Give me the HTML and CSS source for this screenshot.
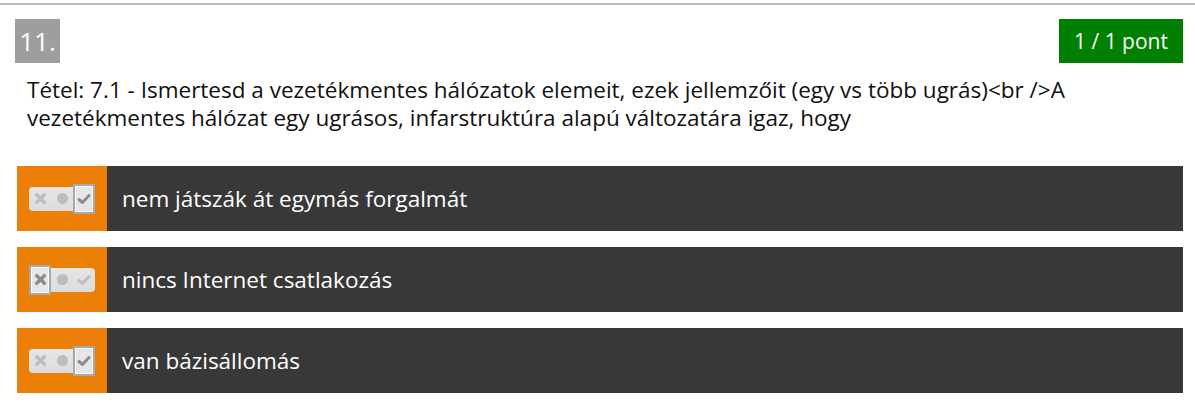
FILE: index.html
```html
<!DOCTYPE html>
<html lang="hu">
<head>
<meta charset="utf-8">
<link rel="stylesheet" href="styles.css">
</head>
<body>
<div class="page">
  <div class="question">
    <div class="head">
      <span class="num">11.</span>
      <span class="score">1 / 1 pont</span>
    </div>
    <p class="text">Tétel: 7.1 - Ismertesd a vezetékmentes hálózatok elemeit, ezek jellemzőit (egy vs több ugrás)&lt;br /&gt;A vezetékmentes hálózat egy ugrásos, infarstruktúra alapú változatára igaz, hogy</p>
    <div class="options">
      <div class="option">
        <div class="mark">
          <div class="toggle state-yes">
            <span class="slot x"><svg viewBox="0 0 12 12" width="13" height="13"><path d="M2.5 2.5 L9.5 9.5 M9.5 2.5 L2.5 9.5" stroke="#bdbdbd" stroke-width="3.2" stroke-linecap="round"/></svg></span>
            <span class="slot dot"><span class="circle"></span></span>
            <span class="slot ok"><svg viewBox="0 0 14 12" width="14" height="12"><path d="M2 6.5 L5.5 9.5 L12 2.5" fill="none" stroke="#8c8c8c" stroke-width="3" stroke-linecap="round" stroke-linejoin="round"/></svg></span>
          </div>
        </div>
        <div class="label">nem játszák át egymás forgalmát</div>
      </div>
      <div class="option">
        <div class="mark">
          <div class="toggle state-no">
            <span class="slot x"><svg viewBox="0 0 12 12" width="13" height="13"><path d="M2.5 2.5 L9.5 9.5 M9.5 2.5 L2.5 9.5" stroke="#8c8c8c" stroke-width="3.2" stroke-linecap="round"/></svg></span>
            <span class="slot dot"><span class="circle"></span></span>
            <span class="slot ok"><svg viewBox="0 0 14 12" width="14" height="12"><path d="M2 6.5 L5.5 9.5 L12 2.5" fill="none" stroke="#bdbdbd" stroke-width="3" stroke-linecap="round" stroke-linejoin="round"/></svg></span>
          </div>
        </div>
        <div class="label">nincs Internet csatlakozás</div>
      </div>
      <div class="option">
        <div class="mark">
          <div class="toggle state-yes">
            <span class="slot x"><svg viewBox="0 0 12 12" width="13" height="13"><path d="M2.5 2.5 L9.5 9.5 M9.5 2.5 L2.5 9.5" stroke="#bdbdbd" stroke-width="3.2" stroke-linecap="round"/></svg></span>
            <span class="slot dot"><span class="circle"></span></span>
            <span class="slot ok"><svg viewBox="0 0 14 12" width="14" height="12"><path d="M2 6.5 L5.5 9.5 L12 2.5" fill="none" stroke="#8c8c8c" stroke-width="3" stroke-linecap="round" stroke-linejoin="round"/></svg></span>
          </div>
        </div>
        <div class="label">van bázisállomás</div>
      </div>
    </div>
  </div>
</div>
</body>
</html>
```

FILE: styles.css
```css
html, body {
  margin: 0;
  padding: 0;
  background: #fff;
}
body {
  font-family: "Open Sans", "Liberation Sans", sans-serif;
  color: #111;
}
.page {
  padding-top: 3px;
}
.question {
  border-top: 2px solid #bdbdbd;
  padding: 14px 12px 0 17px;
}
.head {
  display: flex;
  justify-content: space-between;
  align-items: flex-start;
  margin-left: -2px;
}
.num {
  display: flex;
  align-items: center;
  justify-content: center;
  width: 45px;
  height: 44px;
  background: #9e9e9e;
  color: #fff;
  font-size: 26px;
}
.score {
  display: flex;
  align-items: center;
  justify-content: center;
  width: 124px;
  height: 44px;
  background: #008000;
  color: #fff;
  font-size: 21px;
}
.text {
  margin: 13px 0 0 10px;
  font-size: 22.5px;
  line-height: 28px;
  color: #111;
}
.options {
  display: flex;
  flex-direction: column;
  gap: 16px;
  margin-top: 34px;
}
.option {
  display: flex;
  height: 65px;
  background: #383838;
}
.mark {
  width: 90px;
  background: #ec7f07;
  display: flex;
  align-items: center;
  justify-content: center;
}
.toggle {
  display: flex;
  align-items: center;
  width: 66px;
  height: 24px;
  background: linear-gradient(#e6e6e6, #dcdcdc);
  border-radius: 4px;
}
.slot {
  width: 22px;
  height: 24px;
  display: flex;
  align-items: center;
  justify-content: center;
}
.circle {
  width: 11px;
  height: 11px;
  border-radius: 50%;
  background: #bcbcbc;
}
.state-yes .ok,
.state-no .x {
  box-sizing: border-box;
  height: 30px;
  background: #e6e6e6;
  border: 2px solid #a9a9a9;
  box-shadow: inset 0 0 0 1px #f8f8f8;
}
.label {
  flex: 1;
  display: flex;
  align-items: center;
  padding-left: 15px;
  color: #fff;
  font-size: 22.5px;
}
```
